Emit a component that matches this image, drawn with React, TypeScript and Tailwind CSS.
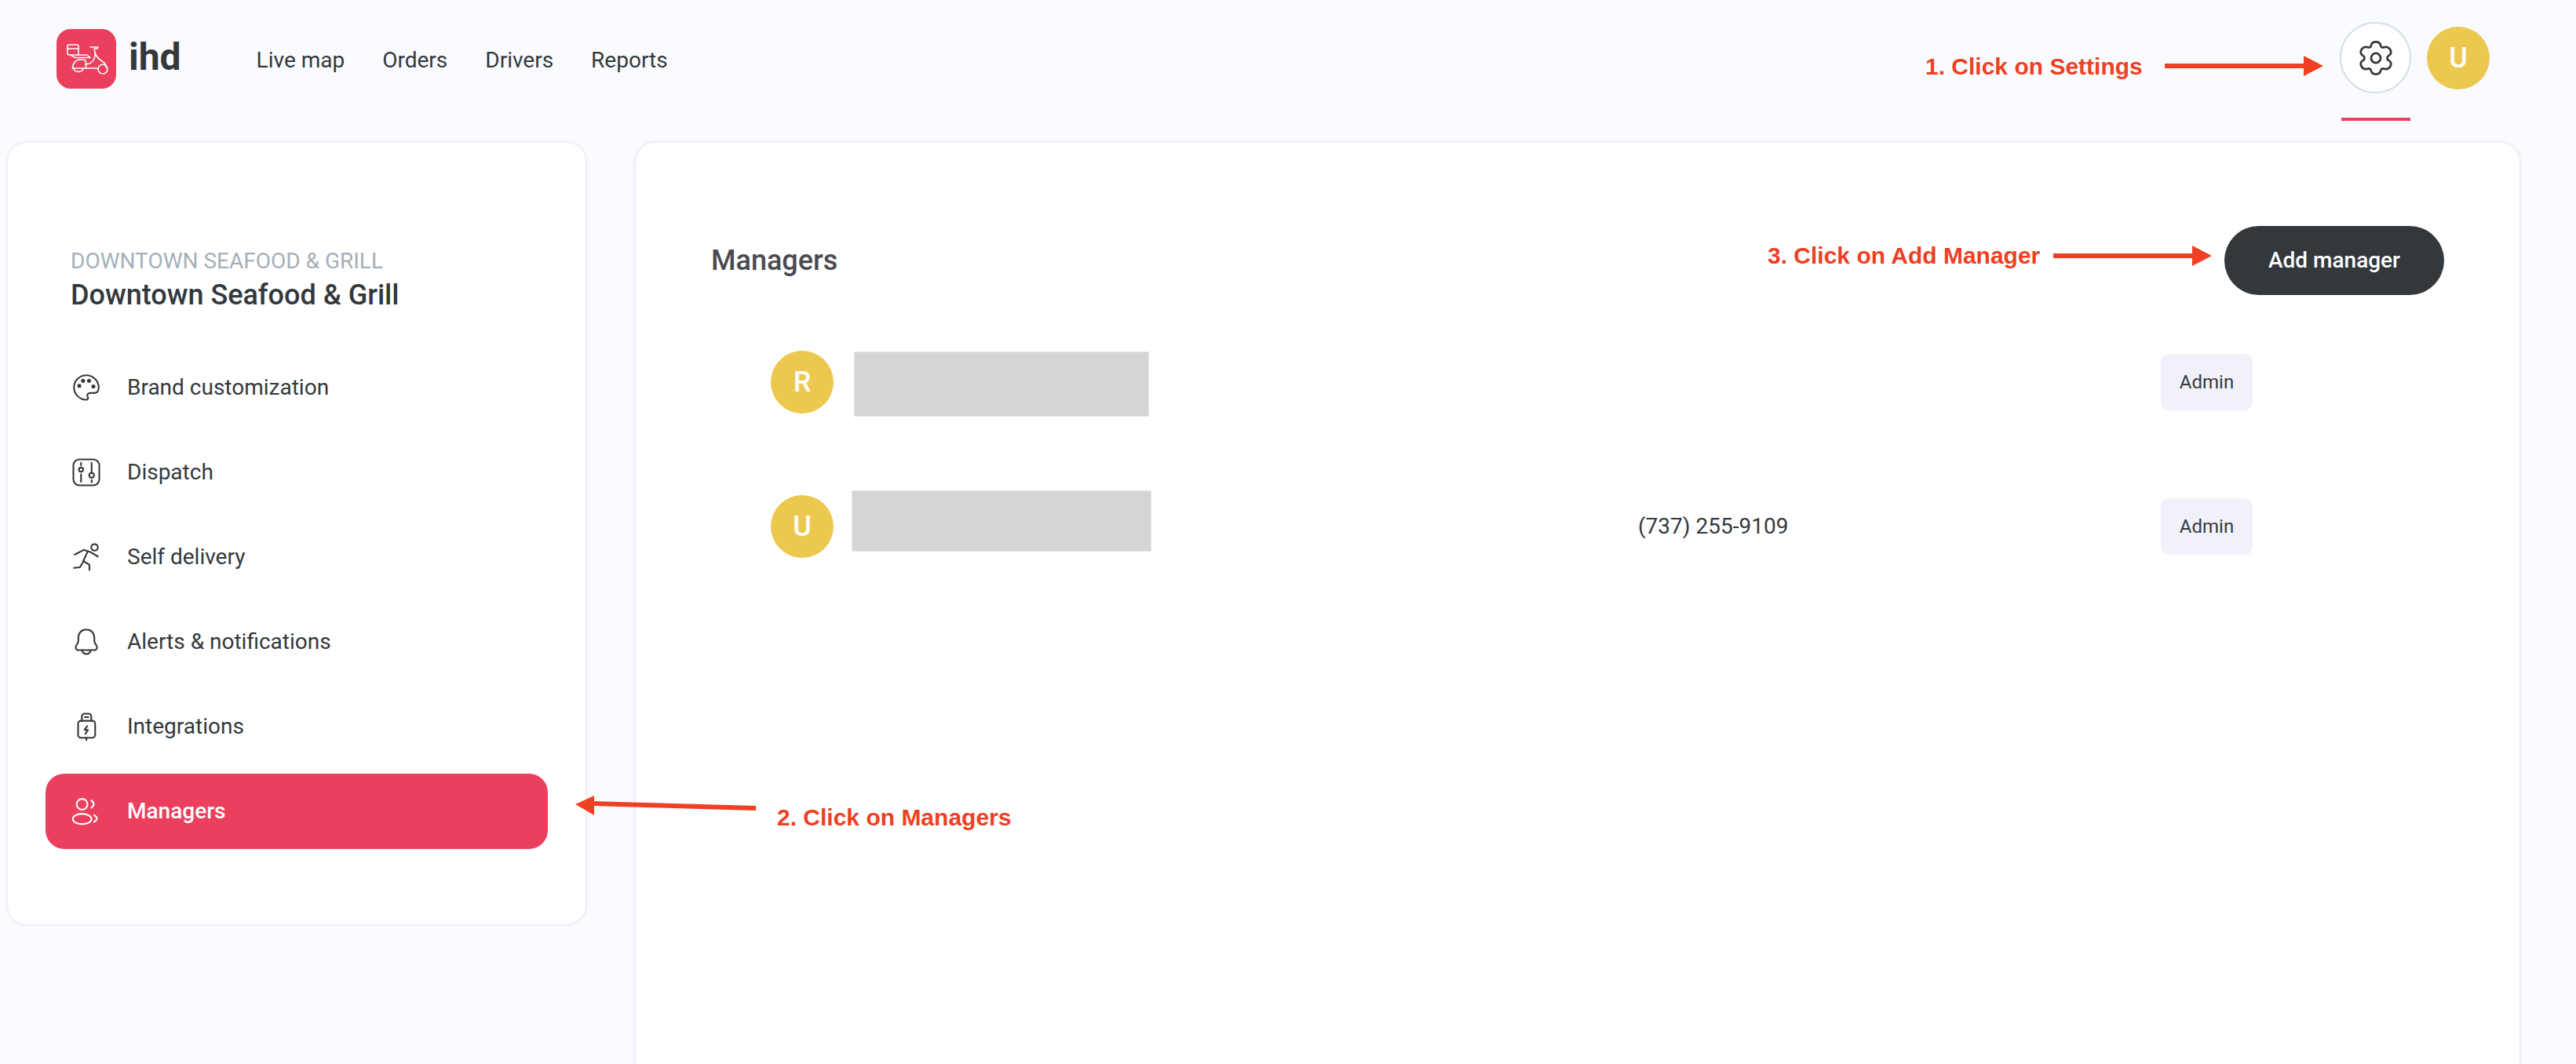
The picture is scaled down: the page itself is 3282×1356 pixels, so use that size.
import type { ReactNode } from "react";

const topLinks = ["Live map", "Orders", "Drivers", "Reports"];

function Icon({ children }: { children: ReactNode }) {
  return (
    <svg viewBox="0 0 24 24" fill="none" stroke="currentColor" strokeWidth="1.4" strokeLinecap="round" strokeLinejoin="round" className="w-9 h-9 shrink-0">
      {children}
    </svg>
  );
}

const navItems = [
  {
    label: "Brand customization",
    icon: (
      <Icon>
        <path d="M12 1.5C6.4 1.5 1.5 6 1.5 11.6c0 5.7 4.6 10.7 10.2 10.7 1.5 0 2.1-1.1 1.6-2.2-.5-1-.8-2.1.1-2.9.7-.6 1.6-.6 2.4-.6h2.7c2.4 0 4-1.6 4-4.6C22.500 6.200 17.600 1.500 12 1.500z" />
        <circle cx="6" cy="10.500" r="1" fill="currentColor" />
        <circle cx="9.200" cy="6.200" r="1" fill="currentColor" />
        <circle cx="14.300" cy="6.200" r="1" fill="currentColor" />
        <circle cx="18" cy="11" r="1" fill="currentColor" />
      </Icon>
    ),
  },
  {
    label: "Dispatch",
    icon: (
      <Icon>
        <rect x="1" y="1" width="22" height="22" rx="5" />
        <path d="M7.500 3.800v2.200M7.500 13.500v6.500M16.500 3.800v8M16.500 18.500v2" />
        <circle cx="7.500" cy="9.700" r="1.800" />
        <circle cx="16.500" cy="14.500" r="2.100" />
      </Icon>
    ),
  },
  {
    label: "Self delivery",
    icon: (
      <Icon>
        <circle cx="19" cy="3.700" r="2.800" />
        <path d="M2.200 9.800 9.800 5.900l5.500 1.700 6.500 3.900" />
        <path d="M13 7.600 9.400 15.300l5.200 3.200V23" />
        <path d="M9.800 15.300 6.500 20.700l-5 .5" />
      </Icon>
    ),
  },
  {
    label: "Alerts & notifications",
    icon: (
      <Icon>
        <path d="M12 1.500c-4 0-6.800 3-6.800 7V11c0 1.600-.6 2.600-1.600 3.800-1.400 1.700-.5 4.200 1.800 4.200h13.200c2.300 0 3.200-2.500 1.800-4.200-1-1.200-1.600-2.200-1.600-3.800V8.500c0-4-2.800-7-6.800-7z" />
        <path d="M8.200 19c.4 2 1.900 3.300 3.800 3.300s3.400-1.300 3.800-3.300" />
      </Icon>
    ),
  },
  {
    label: "Integrations",
    icon: (
      <Icon>
        <rect x="5" y="7.100" width="14.500" height="14.400" rx="2.500" />
        <path d="M8.200 7.100V3.500a2.500 2.500 0 0 1 2.500-2.500h3a2.500 2.500 0 0 1 2.500 2.500v3.600" />
        <path d="M10.700 4h3.100M12 21.500v2" />
        <path d="M12.800 11.500l-2.300 3.300h3l-2.300 3.300" />
      </Icon>
    ),
  },
  {
    label: "Managers",
    active: true,
    icon: (
      <Icon>
        <circle cx="8.400" cy="6" r="4.600" />
        <path d="M16.200 2.800Q20.500 5.800 16.200 9" />
        <ellipse cx="8.400" cy="18.500" rx="8" ry="4.400" />
        <path d="M18.600 15.300Q23.500 18 18.600 20.900" />
      </Icon>
    ),
  },
];

function Logo() {
  return (
    <div className="w-[76px] h-[76px] rounded-[18px] bg-[#eb3f5e] flex items-center justify-center">
      <svg viewBox="0 0 76 76" fill="none" stroke="white" strokeWidth="1.600" strokeLinecap="round" strokeLinejoin="round" className="w-[76px] h-[76px]">
        <rect x="14" y="20" width="14" height="13" rx="2" />
        <path d="M14 25h14M18 33l6 3.500h19" />
        <path d="M26 33h13l4 3.500" />
        <path d="M20.500 50c0-6 4-11 9-11h4c3 0 4 2 4 4v7" />
        <path d="M20.500 50H53M21.500 50a7 7 0 0 0 13 0" />
        <path d="M43 23h10l-1 2h-4l1 5c1 5 6 9 9 11 3 1.500 5 4 5 8M49 30c1 6-2 12-7 14l-5 1" />
        <circle cx="59" cy="51" r="6" />
      </svg>
    </div>
  );
}

function Gear() {
  return (
    <svg viewBox="0 0 24 24" fill="none" stroke="currentColor" strokeWidth="1.500" strokeLinejoin="round" className="w-11 h-11">
      <path d="M8.600 3.400C9 1.600 10.400.8 12 .8s3 .8 3.400 2.600c.2 1 .9 1.400 1.800 1.200C19 4 20.800 4.300 21.900 6c1.100 1.800.7 3.500-.9 4.300-1 .5-1.100 1.100-1.100 1.700s.1 1.200 1.100 1.700c1.600.8 2 2.500.9 4.300-1.100 1.700-2.900 2-4.700 1.400-.9-.2-1.600.2-1.800 1.200-.4 1.800-1.800 2.600-3.400 2.600s-3-.8-3.400-2.600c-.2-1-.9-1.400-1.800-1.200-1.800.6-3.600.3-4.700-1.400-1.100-1.800-.7-3.500.9-4.300 1-.5 1.100-1.100 1.100-1.700s-.1-1.200-1.100-1.700C1.400 9.500 1 7.800 2.100 6 3.200 4.300 5 4 6.800 4.600c.9.200 1.600-.2 1.800-1.200z" />
      <circle cx="12" cy="12" r="3.300" />
    </svg>
  );
}

function Avatar({ letter }: { letter: string }) {
  return <div className="w-20 h-20 rounded-full bg-[#edc84f] text-white text-[36px] font-medium flex items-center justify-center shrink-0">{letter}</div>;
}

function Note({ className, children }: { className: string; children: ReactNode }) {
  return <div className={`absolute font-['Liberation_Sans',Arial,sans-serif] font-bold text-[30px] leading-none text-[#ee4023] whitespace-nowrap ${className}`}>{children}</div>;
}

function Arrow({ className }: { className: string }) {
  return (
    <svg viewBox="0 0 202 26" className={`absolute w-[202px] h-[26px] ${className}`}>
      <path d="M0 13H180" stroke="#ee4023" strokeWidth="6" />
      <path d="M202 13 177 0v26z" fill="#ee4023" />
    </svg>
  );
}

export default function App() {
  return (
    <div className="relative w-[3282px] h-[1356px] overflow-hidden bg-[#fafbff] font-['Roboto',sans-serif] text-[#33383c]">
      {/* Top bar */}
      <header className="h-[182px] pl-[72px] pr-[110px] flex items-start justify-between">
        <div className="flex items-center pt-[37px]">
          <Logo />
          <span className="ml-[16px] text-[48px] leading-none font-bold -mt-[4px]">ihd</span>
          <nav className="ml-[96px] flex gap-[48px] text-[28px] pt-[3px]">
            {topLinks.map((link) => (
              <a key={link}>{link}</a>
            ))}
          </nav>
        </div>
        <div className="flex gap-[20px] pt-[28px]">
          <div className="flex flex-col items-center">
            <button className="w-[91px] h-[91px] rounded-full bg-white border-2 border-[#d5dfe8] flex items-center justify-center">
              <Gear />
            </button>
            <div className="mt-[31px] w-[88px] h-1 bg-[#eb3f5e]" />
          </div>
          <div className="pt-[6px]">
            <Avatar letter="U" />
          </div>
        </div>
      </header>

      <div className="flex items-start gap-[64px] pl-[10px] pr-[72px]">
        {/* Settings menu */}
        <aside className="w-[736px] h-[996px] shrink-0 rounded-[24px] bg-white shadow-[0_0_4px_rgba(30,40,80,0.16)] px-[48px] pt-[134px]">
          <div className="px-[32px]">
            <div className="text-[28px] leading-[34px] text-[#a5b0b8]">DOWNTOWN SEAFOOD &amp; GRILL</div>
            <div className="mt-[3px] text-[36px] leading-[46px] font-medium">Downtown Seafood &amp; Grill</div>
          </div>
          <ul className="mt-[47px] flex flex-col gap-[12px]">
            {navItems.map((item) => (
              <li key={item.label} className={`h-[96px] rounded-[24px] pl-[34px] flex items-center gap-[34px] text-[28px] ${item.active ? "bg-[#eb3f5e] text-white font-medium" : ""}`}>
                {item.icon}
                <span>{item.label}</span>
              </li>
            ))}
          </ul>
        </aside>

        {/* Managers list */}
        <main className="flex-1 h-[1300px] rounded-[24px] bg-white shadow-[0_0_4px_rgba(30,40,80,0.16)] pt-[106px] pl-[96px] pr-[96px]">
          <div className="flex items-center justify-between">
            <h1 className="text-[36px] font-medium text-[#4a4a50]">Managers</h1>
            <button className="w-[280px] h-[88px] rounded-full bg-[#33383c] text-white text-[28px] font-medium">Add manager</button>
          </div>
          <div className="mt-[69px] pl-[76px] pr-[244px] flex items-center justify-between h-[84px]">
            <div className="flex items-center gap-[26px]">
              <Avatar letter="R" />
              <div className="w-[376px] h-[83px] mt-[5px] bg-[#d5d5d5] border border-[#e6e6e6]" />
            </div>
            <span className="w-[117px] h-[72px] rounded-[10px] bg-[#f1f2f9] text-[24px] flex items-center justify-center">Admin</span>
          </div>
          <div className="mt-[100px] pl-[76px] pr-[244px] flex items-center h-[84px]">
            <div className="flex items-center gap-[23px] w-[1105px]">
              <Avatar letter="U" />
              <div className="w-[382px] h-[78px] -mt-[14px] bg-[#d5d5d5] border border-[#e6e6e6]" />
            </div>
            <span className="text-[28px] flex-1">(737) 255-9109</span>
            <span className="w-[117px] h-[72px] rounded-[10px] bg-[#f1f2f9] text-[24px] flex items-center justify-center">Admin</span>
          </div>
        </main>
      </div>

      {/* Annotations */}
      <Note className="left-[2453px] top-[70px]">1. Click on Settings</Note>
      <Arrow className="left-[2758px] top-[71px]" />
      <Note className="left-[2252px] top-[311px]">3. Click on Add Manager</Note>
      <Arrow className="left-[2616px] top-[313px]" />
      <svg viewBox="0 0 230 26" className="absolute left-[733px] top-[1014px] w-[230px] h-[26px]">
        <path d="M22 10 230 16" stroke="#ee4023" strokeWidth="6" />
        <path d="M0 11 24 0v25z" fill="#ee4023" />
      </svg>
      <Note className="left-[990px] top-[1027px]">2. Click on Managers</Note>
    </div>
  );
}
